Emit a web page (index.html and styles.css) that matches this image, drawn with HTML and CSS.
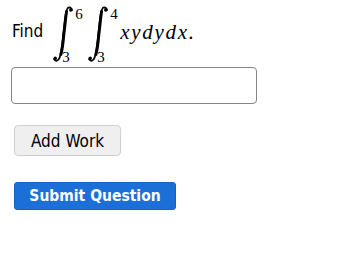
FILE: index.html
```html
<!DOCTYPE html>
<html>
<head>
<meta charset="utf-8">
<link rel="stylesheet" href="styles.css">
</head>
<body>
<div class="page">
  <div class="question">
    <span class="find">Find</span>
    <span class="int">
      <svg class="int-sign" width="24" height="58" viewBox="0 0 24 58">
        <path d="M21 5.2 C20.6 2.6 18.2 1.6 16.6 3.2 C14.6 5.4 14 12 12.8 24 C11.6 36 10.6 47 8.6 52.6 C7.4 56 4.6 57 3 54.2" fill="none" stroke="#000" stroke-width="1.7" stroke-linecap="round"/>
        <path d="M15.6 6.5 C14.6 12 13.9 22 12.9 29 C12.1 38 11.2 45 9.9 49.5" fill="none" stroke="#000" stroke-width="2.9" stroke-linecap="round"/>
        <circle cx="19.8" cy="4.9" r="1.8"/>
        <circle cx="4.2" cy="53.4" r="1.8"/>
      </svg>
      <span class="sup">6</span>
      <span class="sub">3</span>
    </span>
    <span class="int">
      <svg class="int-sign" width="24" height="58" viewBox="0 0 24 58">
        <path d="M21 5.2 C20.6 2.6 18.2 1.6 16.6 3.2 C14.6 5.4 14 12 12.8 24 C11.6 36 10.6 47 8.6 52.6 C7.4 56 4.6 57 3 54.2" fill="none" stroke="#000" stroke-width="1.7" stroke-linecap="round"/>
        <path d="M15.6 6.5 C14.6 12 13.9 22 12.9 29 C12.1 38 11.2 45 9.9 49.5" fill="none" stroke="#000" stroke-width="2.9" stroke-linecap="round"/>
        <circle cx="19.8" cy="4.9" r="1.8"/>
        <circle cx="4.2" cy="53.4" r="1.8"/>
      </svg>
      <span class="sup">4</span>
      <span class="sub">3</span>
    </span>
    <span class="expr">xydydx.</span>
  </div>
  <input class="answer" type="text">
  <div class="actions">
    <button class="btn-work" type="button">Add Work</button>
    <button class="btn-submit" type="button">Submit Question</button>
  </div>
</div>
</body>
</html>
```
FILE: styles.css
```css
html, body {
  margin: 0;
  padding: 0;
  background: #fff;
}
.page {
  padding: 4px 0 0 11px;
  display: flex;
  flex-direction: column;
  align-items: flex-start;
  font-family: "DejaVu Sans Condensed", "DejaVu Sans", sans-serif;
  font-stretch: condensed;
}
.question {
  display: flex;
  align-items: flex-start;
  height: 59px;
}
.find {
  font-size: 17px;
  line-height: 20px;
  margin-top: 17px;
  margin-left: 1px;
  margin-right: 8px;
  color: #000;
}
.int {
  display: inline-grid;
  grid-template-columns: 24px 11px;
  grid-template-rows: 14px 31px 14px;
  height: 59px;
}
.int-sign {
  grid-area: 1 / 1 / 4 / 2;
  display: block;
  margin-top: 1px;
}
.sup, .sub {
  font-family: "Liberation Serif", serif;
  font-size: 15px;
  line-height: 14px;
  color: #000;
}
.sup {
  grid-area: 1 / 2 / 2 / 3;
  margin-top: 3px;
}
.sub {
  grid-area: 3 / 1 / 4 / 3;
  margin-left: 11px;
  margin-top: 1px;
}
.expr {
  font-family: "Liberation Serif", serif;
  font-style: italic;
  font-size: 21px;
  line-height: 22px;
  letter-spacing: 1.7px;
  margin-top: 17px;
  margin-left: -1px;
  color: #000;
}
.answer {
  margin: 4px 0 0 0;
  width: 246px;
  height: 37px;
  box-sizing: border-box;
  border: 1px solid #858585;
  border-radius: 4px;
  background: #fff;
  padding: 0 8px;
}
.actions {
  display: flex;
  flex-direction: column;
  align-items: flex-start;
  margin-left: 3px;
}
.btn-work {
  margin-top: 21px;
  width: 107px;
  height: 31px;
  box-sizing: border-box;
  background: #efefef;
  border: 1px solid #cfcfcf;
  border-radius: 4px;
  font-family: "DejaVu Sans Condensed", "DejaVu Sans", sans-serif;
  font-stretch: condensed;
  font-size: 17px;
  color: #000;
  padding: 0;
}
.btn-submit {
  margin-top: 26px;
  width: 162px;
  height: 28px;
  box-sizing: border-box;
  background: #1c6fd6;
  border: 1px solid #1863c2;
  border-radius: 3px;
  font-family: "DejaVu Sans Condensed", "DejaVu Sans", sans-serif;
  font-stretch: condensed;
  font-weight: bold;
  font-size: 15.5px;
  color: #fff;
  padding: 0;
}
```
